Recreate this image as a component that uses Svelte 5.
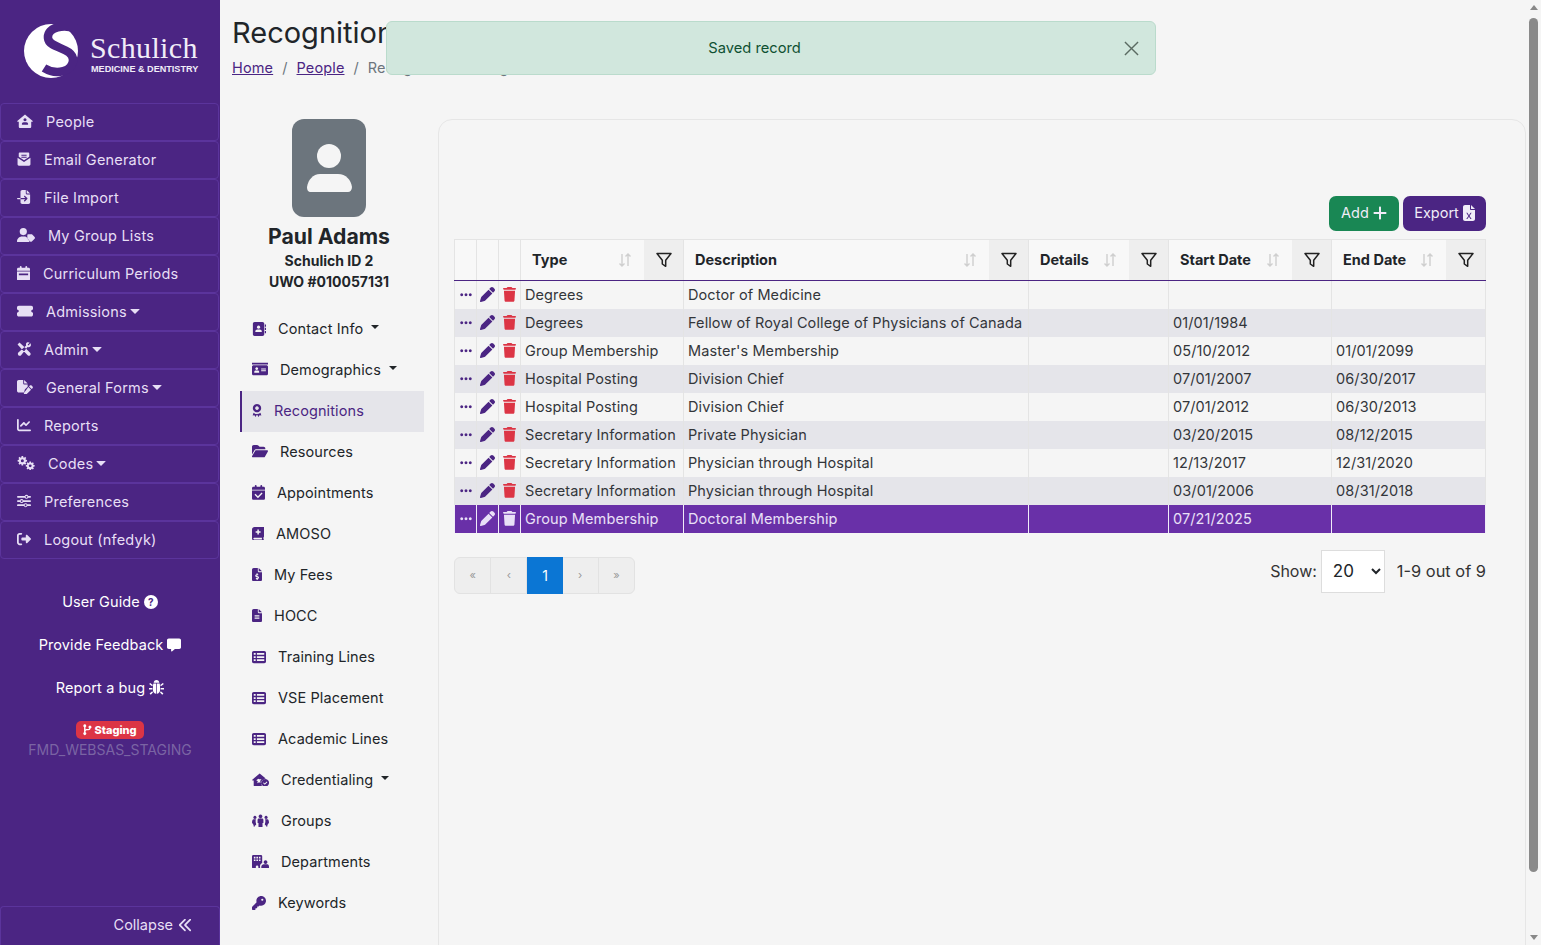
<script>
  function gear(cx, cy, r, n = 8) {
    let d = '';
    const step = (Math.PI * 2) / n;
    for (let i = 0; i < n; i++) {
      const a = i * step;
      const pts = [[-0.3, 0.76], [-0.2, 1], [0.2, 1], [0.3, 0.76]];
      for (const [o, k] of pts) {
        const t = a + o * step * 1.1;
        d += (d ? 'L' : 'M') + (cx + Math.cos(t) * r * k).toFixed(1) + ' ' + (cy + Math.sin(t) * r * k).toFixed(1);
      }
    }
    const h = r * 0.32;
    d += `Z M${cx - h} ${cy}a${h} ${h} 0 1 0 ${2 * h} 0a${h} ${h} 0 1 0 ${-2 * h} 0Z`;
    return d;
  }
  const I = {
    house: ['0 0 576 512', 'M288 16L566 250c10 10 4 30-12 30h-42v180c0 28-22 50-50 50H114c-28 0-50-22-50-50V280H22c-16 0-22-20-12-30ZM288 150a55 55 0 1 0 .1 0ZM240 300h96c40 0 66 30 66 70 0 10-8 18-18 18H192c-10 0-18-8-18-18 0-40 26-70 66-70Z'],
    mail: ['0 0 512 512', 'M96 20h320c20 0 32 14 32 32v120L256 300 64 172V52c0-18 12-32 32-32ZM160 100h192v40H160ZM160 170h192v40H160ZM20 210l236 160 236-160v240c0 30-22 50-50 50H70c-28 0-50-20-50-50Z'],
    fileimp: ['0 0 512 512', 'M192 0h130v130c0 18 14 32 32 32h126v286c0 35-29 64-64 64H192c-35 0-64-29-64-64V336h174l-40 40c-9 9-9 25 0 34s25 9 34 0l80-80c9-9 9-25 0-34l-80-80c-9-9-25-9-34 0s-9 25 0 34l40 40H128V64C128 29 157 0 192 0ZM354 0l126 130H354ZM24 288h104v48H24c-13 0-24-11-24-24s11-24 24-24Z'],
    usertag: ['0 0 640 512', 'M224 256a128 128 0 1 0 0-256 128 128 0 1 0 0 256ZM178 304h90c40 0 75 20 95 50v10l70 70c15 15 15 40 0 55l-10 23H30c-16 0-30-14-30-30C0 384 80 304 178 304ZM400 220h110c12 0 24 5 32 13l85 85c17 17 17 45 0 62L527 480c-17 17-45 17-62 0l-85-85c-8-8-13-20-13-32V252c0-18 14-32 33-32Z'],
    cal: ['0 0 448 512', 'M128 0c18 0 32 14 32 32v32h128V32c0-18 14-32 32-32s32 14 32 32v32h48c26 0 48 22 48 48v48H0v-48c0-26 22-48 48-48h48V32c0-18 14-32 32-32ZM0 192h448v272c0 26-22 48-48 48H48c-26 0-48-22-48-48ZM64 256v64h320v-64Z'],
    ticket: ['0 0 576 512', 'M64 64C29 64 0 93 0 128v64c0 9 7 16 16 16 26 0 48 22 48 48s-22 48-48 48c-9 0-16 7-16 16v64c0 35 29 64 64 64h448c35 0 64-29 64-64v-64c0-9-7-16-16-16-26 0-48-22-48-48s22-48 48-48c9 0 16-7 16-16v-64c0-35-29-64-64-64Z'],
    tools: ['0 0 512 512', 'M20 90L90 20l160 140 230 230c25 25 25 65 0 90-25 25-65 25-90 0L160 250ZM360 20c30-20 75-20 105 5l-75 70 30 30 70-75c25 30 25 75 5 105-25 35-70 45-110 30L150 480c-25 25-75 25-100 0s-25-75 0-100L335 130c-15-40-10-85 25-110Z'],
    filepen: ['0 0 576 512', 'M64 0h160v128c0 18 14 32 32 32h128v80L290 335c-8 8-14 19-16 30l-18 85H64c-35 0-64-29-64-64V64C0 29 29 0 64 0ZM256 0l128 128H256ZM525 200l34 34c18 18 18 45 0 62l-30 30-96-96 30-30c18-18 44-18 62 0ZM410 254l96 96-170 170c-6 6-14 10-22 12l-74 12 12-74c2-8 6-16 12-22Z'],
    chart: ['0 0 512 512', 'M32 32a32 32 0 0 1 32 32V400c0 9 7 16 16 16H480a32 32 0 0 1 0 64H80C36 480 0 444 0 400V64A32 32 0 0 1 32 32ZM467 169L352 284c-12 12-33 12-45 0l-57-57-87 87c-12 12-33 12-45 0s-12-33 0-45L228 159c12-12 33-12 45 0l57 57 92-92c12-12 33-12 45 0s12 33 0 45Z'],
    gears: ['0 0 640 512', gear(190, 170, 170, 8) + gear(470, 350, 160, 8)],
    sliders: ['0 0 512 512', 'M32 70h250a72 72 0 0 1 130 0h68a32 32 0 0 1 0 64h-68a72 72 0 0 1-130 0H32a32 32 0 0 1 0-64ZM347 70a32 32 0 1 0 .1 0ZM32 224h74a72 72 0 0 1 130 0h244a32 32 0 0 1 0 64H236a72 72 0 0 1-130 0H32a32 32 0 0 1 0-64ZM171 224a32 32 0 1 0 .1 0ZM32 378h218a72 72 0 0 1 130 0h100a32 32 0 0 1 0 64H380a72 72 0 0 1-130 0H32a32 32 0 0 1 0-64ZM315 378a32 32 0 1 0 .1 0Z'],
    logout: ['0 0 512 512', 'M160 96c18 0 32-14 32-32s-14-32-32-32H96C43 32 0 75 0 128v256c0 53 43 96 96 96h64c18 0 32-14 32-32s-14-32-32-32H96c-18 0-32-14-32-32V128c0-18 14-32 32-32ZM505 273c9-9 9-25 0-34L377 111c-9-9-23-12-35-7s-20 17-20 30v66H192c-18 0-32 14-32 32v48c0 18 14 32 32 32h130v66c0 13 8 25 20 30s26 2 35-7Z'],
    comment: ['0 0 512 512', 'M64 16h384c35 0 64 29 64 64v256c0 35-29 64-64 64H290l-110 90c-12 10-30 1-30-14v-76H64c-35 0-64-29-64-64V80c0-35 29-64 64-64Z'],
    bug: ['0 0 512 512', 'M256 0c53 0 96 43 96 96H160c0-53 43-96 96-96ZM150 118h94v350c-60-5-110-60-110-130 0-80 0-190 16-220ZM268 118h94c16 30 16 140 16 220 0 70-50 125-110 130ZM40 100l90 70-24 40-100-70ZM472 100l-90 70 24 40 100-70ZM0 270h115v55H0ZM397 270h115v55H397ZM110 385l25 40-75 80-40-40ZM402 385l-25 40 75 80 40-40Z'],
    branch: ['0 0 448 512', 'M80 16a64 64 0 0 1 32 120v110c25-15 55-22 96-22h30c25 0 38-14 43-32a64 64 0 1 1 62 2c-8 50-45 90-105 90h-30c-60 0-90 25-96 55v36a64 64 0 1 1-64 0V136A64 64 0 0 1 80 16Z'],
    addr: ['0 0 512 512', 'M96 0h288c35 0 64 29 64 64v384c0 35-29 64-64 64H96c-35 0-64-29-64-64V64C32 29 61 0 96 0ZM240 130a60 60 0 1 0 .1 0ZM200 270h80c45 0 80 35 80 75 0 12-10 22-22 22H142c-12 0-22-10-22-22 0-40 35-75 80-75ZM470 90h42v80h-42ZM470 210h42v80h-42ZM470 330h42v80h-42Z'],
    idcard: ['0 0 576 512', 'M0 30h576v60H0ZM64 120h448c35 0 64 20 64 50v250c0 35-29 60-64 60H64c-35 0-64-25-64-60V170c0-30 29-50 64-50ZM170 190a50 50 0 1 0 .1 0ZM130 310h80c30 0 50 25 50 60 0 10-8 20-20 20H100c-12 0-20-10-20-20 0-35 20-60 50-60ZM330 230v36h170v-36ZM330 300v36h170v-36Z'],
    award: ['0 0 384 512', 'M192 0a160 160 0 1 1-.1 0ZM192 90a70 70 0 1 0 .1 0ZM60 340c35 30 80 45 132 45s97-15 132-45l35 105-70-15-40 70-57-100-57 100-40-70-70 15Z'],
    calcheck: ['0 0 448 512', 'M128 0c18 0 32 14 32 32v32h128V32c0-18 14-32 32-32s32 14 32 32v32h48c26 0 48 22 48 48v48H0v-48c0-26 22-48 48-48h48V32c0-18 14-32 32-32ZM0 192h448v272c0 26-22 48-48 48H48c-26 0-48-22-48-48ZM330 262L205 387l-85-85-34 34 119 119 159-159Z'],
    book: ['0 0 448 512', 'M96 0h352v352c0 16-8 30-20 38v58c18 0 20 64 0 64H80c-45 0-80-35-80-80V96C0 43 43 0 96 0ZM200 96v64h-64v56h64v64h56v-64h64v-56h-64V96ZM80 400c-18 0-32 14-32 32s14 32 32 32h290v-64Z'],
    feedollar: ['0 0 384 512', 'M64 0h160v128c0 18 14 32 32 32h128v288c0 35-29 64-64 64H64c-35 0-64-29-64-64V64C0 29 29 0 64 0ZM256 0l128 128H256ZM176 200v36c-30 8-52 30-52 60 0 40 35 52 64 60 20 6 34 10 34 20 0 12-32 16-65 0l-15 38c15 7 28 10 34 12v38h42v-36c32-8 52-30 52-60 0-40-35-52-64-60-22-6-34-10-34-20 0-12 30-16 58-4l15-38c-12-5-23-8-31-10v-36Z'],
    filelines: ['0 0 384 512', 'M64 0h160v128c0 18 14 32 32 32h128v288c0 35-29 64-64 64H64c-35 0-64-29-64-64V64C0 29 29 0 64 0ZM256 0l128 128H256ZM100 240v44h184v-44ZM100 330v44h184v-44Z'],
    table: ['0 0 512 512', 'M64 32h384c35 0 64 29 64 64v320c0 35-29 64-64 64H64c-35 0-64-29-64-64V96c0-35 29-64 64-64ZM64 110v64h70v-64ZM180 110v64h268v-64ZM64 224v64h70v-64ZM180 224v64h268v-64ZM64 338v64h70v-64ZM180 338v64h268v-64Z'],
    cred: ['0 0 640 512', 'M288 16l230 190c-90 10-165 90-165 190 0 40 10 80 35 116H114c-28 0-50-22-50-50V280H22c-16 0-22-20-12-30ZM240 220l-80 50 60 45-25 75 75-45 45 30-5-85 50-50h-80l-40-20ZM496 224a144 144 0 1 1-.1 0ZM555 320l-75 75-40-40-24 24 64 64 99-99Z'],
    group: ['0 0 640 512', 'M320 20a70 70 0 1 1-.1 0ZM110 70a60 60 0 1 1-.1 0ZM530 70a60 60 0 1 1-.1 0ZM260 170h120c30 0 50 25 50 60v110h-34v150H244V340h-34V230c0-35 20-60 50-60ZM60 200h90c-20 40-20 110 5 170v50h-45v50H60v-60L0 330c0-70 20-130 60-130ZM490 200h90c40 0 60 60 60 130l-60 80v60h-50v-50h-45v-50c25-60 25-130 5-170Z'],
    dept: ['0 0 640 512', 'M48 0h288c26 0 48 22 48 48v250c-50 20-80 70-80 110v104H240v-70c0-26-22-48-48-48s-48 22-48 48v70H48c-26 0-48-22-48-48V48C0 22 22 0 48 0ZM70 70v60h60V70ZM165 70v60h60V70ZM260 70v60h60V70ZM70 170v60h60v-60ZM165 170v60h60v-60ZM260 170v60h60v-60ZM510 200a70 70 0 1 1-.1 0ZM440 350h140c35 0 60 35 60 90v72H350v-72c0-55 55-90 90-90Z'],
    key: ['0 0 512 512', 'M336 352c97 0 176-79 176-176S433 0 336 0 160 79 160 176c0 19 3 37 8 54L7 391c-5 5-7 11-7 17v80c0 13 11 24 24 24h80c13 0 24-11 24-24v-40h40c13 0 24-11 24-24v-40h40c6 0 13-3 17-7l33-33c17 5 35 8 54 8ZM376 96a40 40 0 1 1 0 80 40 40 0 1 1 0-80Z'],
    dots: ['0 0 448 512', 'M8 256a56 56 0 1 1 112 0 56 56 0 1 1-112 0ZM168 256a56 56 0 1 1 112 0 56 56 0 1 1-112 0ZM384 200a56 56 0 1 1 0 112 56 56 0 1 1 0-112Z'],
    pen: ['0 0 512 512', 'M362.7 19.3L314.3 67.7 444.3 197.7l48.4-48.4c25-25 25-65.5 0-90.5L453.3 19.3c-25-25-65.5-25-90.5 0zm-71 71L58.6 323.5c-10.4 10.4-18 23.3-22.2 37.4L1 481.2C-1.5 489.7 .8 498.8 7 505s15.3 8.5 23.7 6.1l120.3-35.4c14.1-4.2 27-11.8 37.4-22.2L421.7 220.3 291.7 90.3z'],
    trash: ['0 0 448 512', 'M135.2 17.7L128 32H32C14.3 32 0 46.3 0 64S14.3 96 32 96H416c17.7 0 32-14.3 32-32s-14.3-32-32-32H320l-7.2-14.3C307.4 6.8 296.3 0 284.2 0H163.8c-12.1 0-23.2 6.8-28.6 17.7zM416 128H32L53.2 467c1.6 25.3 22.6 45 47.9 45H346.9c25.3 0 46.3-19.7 47.9-45L416 128z'],
    folder: ['0 0 576 512', 'M88.7 223.8L0 375.8V96C0 60.7 28.7 32 64 32H181.5c17 0 33.3 6.7 45.3 18.7l26.5 26.5c12 12 28.3 18.7 45.3 18.7H416c35.3 0 64 28.7 64 64v32H144c-22.8 0-43.8 12.1-55.3 31.8zm27.6 16.1C122.1 230 132.6 224 144 224H544c11.5 0 22 6.1 27.7 16.1s5.7 22.2-.1 32.1l-112 192C453.9 474 443.4 480 432 480H32c-11.5 0-22-6.1-27.7-16.1s-5.7-22.2 .1-32.1l112-192z'],
    plus: ['0 0 448 512', 'M256 80c0-18-14-32-32-32s-32 14-32 32V224H48c-18 0-32 14-32 32s14 32 32 32H192V432c0 18 14 32 32 32s32-14 32-32V288H400c18 0 32-14 32-32s-14-32-32-32H256Z'],
    excel: ['0 0 384 512', 'M64 0h160v128c0 18 14 32 32 32h128v288c0 35-29 64-64 64H64c-35 0-64-29-64-64V64C0 29 29 0 64 0ZM256 0l128 128H256ZM140 250l-36 0 68 100-68 100h36l50-74 50 74h36l-68-100 68-100h-36l-50 74Z'],
    angles: ['0 0 512 512', 'M41 233L233 41c12-12 33-12 45 0s12 33 0 45L108 256 278 426c12 12 12 33 0 45s-33 12-45 0L41 279c-12-12-12-33 0-46ZM233 233L425 41c12-12 33-12 45 0s12 33 0 45L300 256 470 426c12 12 12 33 0 45s-33 12-45 0L233 279c-12-12-12-33 0-46Z']
  };

  const menu = [
    { t: 'People', i: 'house', w: 16 },
    { t: 'Email Generator', i: 'mail', w: 14 },
    { t: 'File Import', i: 'fileimp', w: 14 },
    { t: 'My Group Lists', i: 'usertag', w: 18 },
    { t: 'Curriculum Periods', i: 'cal', w: 13 },
    { t: 'Admissions', i: 'ticket', w: 16, c: 1 },
    { t: 'Admin', i: 'tools', w: 14, c: 1 },
    { t: 'General Forms', i: 'filepen', w: 16, c: 1 },
    { t: 'Reports', i: 'chart', w: 14 },
    { t: 'Codes', i: 'gears', w: 18, c: 1 },
    { t: 'Preferences', i: 'sliders', w: 14 },
    { t: 'Logout (nfedyk)', i: 'logout', w: 14 }
  ];
  const sub = [
    { t: 'Contact Info', i: 'addr', w: 14, c: 1 },
    { t: 'Demographics', i: 'idcard', w: 16, c: 1 },
    { t: 'Recognitions', i: 'award', w: 10, on: 1 },
    { t: 'Resources', i: 'folder', w: 16 },
    { t: 'Appointments', i: 'calcheck', w: 13 },
    { t: 'AMOSO', i: 'book', w: 12 },
    { t: 'My Fees', i: 'feedollar', w: 10 },
    { t: 'HOCC', i: 'filelines', w: 10 },
    { t: 'Training Lines', i: 'table', w: 14 },
    { t: 'VSE Placement', i: 'table', w: 14 },
    { t: 'Academic Lines', i: 'table', w: 14 },
    { t: 'Credentialing', i: 'cred', w: 17, c: 1 },
    { t: 'Groups', i: 'group', w: 17 },
    { t: 'Departments', i: 'dept', w: 17 },
    { t: 'Keywords', i: 'key', w: 14 }
  ];
  const cols = ['Type', 'Description', 'Details', 'Start Date', 'End Date'];
  const rows = [
    ['Degrees', 'Doctor of Medicine', '', '', ''],
    ['Degrees', 'Fellow of Royal College of Physicians of Canada', '', '01/01/1984', ''],
    ['Group Membership', "Master's Membership", '', '05/10/2012', '01/01/2099'],
    ['Hospital Posting', 'Division Chief', '', '07/01/2007', '06/30/2017'],
    ['Hospital Posting', 'Division Chief', '', '07/01/2012', '06/30/2013'],
    ['Secretary Information', 'Private Physician', '', '03/20/2015', '08/12/2015'],
    ['Secretary Information', 'Physician through Hospital', '', '12/13/2017', '12/31/2020'],
    ['Secretary Information', 'Physician through Hospital', '', '03/01/2006', '08/31/2018'],
    ['Group Membership', 'Doctoral Membership', '', '07/21/2025', '']
  ];
  const pages = ['«', '‹', '1', '›', '»'];
  const ht = (name, w) => {
    const [, , vw, vh] = I[name][0].split(' ').map(Number);
    return (w * vh) / vw;
  };
</script>

{#snippet ic(name, w, cls = '')}
  <svg class="ic {cls}" viewBox={I[name][0]} width={w} height={ht(name, w)} aria-hidden="true"><path fill-rule="evenodd" d={I[name][1]} /></svg>
{/snippet}

<div class="page">
  <aside class="side">
    <div class="logo">
      <svg class="mark" viewBox="0 0 54 54" width="54" height="54" aria-hidden="true">
        <circle cx="27" cy="27" r="27" fill="#fff" />
        <path d="M56 6C40 -1 23 3 24 14c1 11 25 9 25 22 0 11-16 16-29 8" fill="none" stroke="#4b2583" stroke-width="8.5" />
      </svg>
      <div class="wordmark">
        <div class="schulich">Schulich</div>
        <div class="med">MEDICINE &amp; DENTISTRY</div>
      </div>
    </div>

    <nav class="menu">
      {#each menu as m}
        <div class="mi">
          {@render ic(m.i, m.w)}
          <span>{m.t}</span>
          {#if m.c}<i class="caret"></i>{/if}
        </div>
      {/each}
    </nav>

    <div class="links">
      <div class="lnk">User Guide <span class="q">?</span></div>
      <div class="lnk">Provide Feedback {@render ic('comment', 14)}</div>
      <div class="lnk">Report a bug {@render ic('bug', 15)}</div>
    </div>
    <div class="env">
      <span class="badge">{@render ic('branch', 10)}Staging</span>
      <div class="envname">FMD_WEBSAS_STAGING</div>
    </div>

    <div class="collapse">Collapse {@render ic('angles', 14)}</div>
  </aside>

  <main class="main">
    <header class="head">
      <h1>Recognitions Listing</h1>
      <div class="crumbs">
        <a href="#home">Home</a><span class="sl">/</span><a href="#people">People</a><span class="sl">/</span><span class="cur">Recognitions Listing</span>
      </div>
    </header>

    <div class="toast">
      <span>Saved record</span>
      <svg class="x" viewBox="0 0 16 16" width="15" height="15" aria-hidden="true"><path d="M1 1l14 14M15 1L1 15" stroke="#5b6b62" stroke-width="1.5" fill="none" /></svg>
    </div>

    <div class="body">
      <section class="profile">
        <svg class="avatar" viewBox="0 0 74 98" width="74" height="98" aria-hidden="true">
          <rect width="74" height="98" rx="12" fill="#6c757d" />
          <circle cx="37" cy="37" r="12" fill="#f5f5f5" />
          <path d="M28 55h18c8 0 13 6 14 13 0 3-2 5-4 5H19c-3 0-4-2-4-5 1-7 6-13 13-13Z" fill="#f5f5f5" />
        </svg>
        <div class="name">Paul Adams</div>
        <div class="idl">Schulich ID 2</div>
        <div class="idl">UWO #010057131</div>

        <nav class="sub">
          {#each sub as s}
            <div class="si" class:on={s.on}>
              {@render ic(s.i, s.w)}
              <span>{s.t}</span>
              {#if s.c}<i class="caret2"></i>{/if}
            </div>
          {/each}
        </nav>
      </section>

      <section class="card">
        <div class="actions">
          <button class="btn add">Add {@render ic('plus', 14)}</button>
          <button class="btn exp">Export {@render ic('excel', 12)}</button>
        </div>

        <table>
          <colgroup>
            <col class="c0" /><col class="c0" /><col class="c0" />
            <col class="c1" /><col class="c2" /><col class="c3" /><col class="c4" /><col class="c5" />
          </colgroup>
          <thead>
            <tr>
              <th></th><th></th><th></th>
              {#each cols as c}
                <th>
                  <div class="thc">
                    <span class="lab">{c}</span>
                    <svg class="sort" viewBox="0 0 14 14" width="14" height="14" aria-hidden="true">
                      <path d="M4 1v12M1.5 10.5 4 13l2.5-2.5M10 13V1M7.5 3.5 10 1l2.5 2.5" fill="none" stroke="#cfcfcf" stroke-width="1.4" />
                    </svg>
                    <span class="fil">
                      <svg viewBox="0 0 16 16" width="16" height="16" aria-hidden="true"><path d="M1 1.5h14L9.7 8.3v6L6.3 12V8.3Z" fill="none" stroke="#222" stroke-width="1.5" stroke-linejoin="round" /></svg>
                    </span>
                  </div>
                </th>
              {/each}
            </tr>
          </thead>
          <tbody>
            {#each rows as r, ri}
              <tr class:alt={ri % 2 === 1} class:sel={ri === 8}>
                <td class="tool">{@render ic('dots', 12, 'dots')}</td>
                <td class="tool">{@render ic('pen', 15, 'pen')}</td>
                <td class="tool">{@render ic('trash', 13, 'trash')}</td>
                {#each r as c}<td>{c}</td>{/each}
              </tr>
            {/each}
          </tbody>
        </table>

        <div class="foot">
          <div class="pager">
            {#each pages as p, i}
              <span class="pg" class:act={i === 2}>{p}</span>
            {/each}
          </div>
          <div class="show">
            <span class="showl">Show:</span>
            <select class="sel-n"><option>20</option></select>
            <span class="cnt">1-9 out of 9</span>
          </div>
        </div>
      </section>
    </div>
  </main>

  <div class="scroll">
    <i class="up"></i>
    <div class="thumb"></div>
    <i class="down"></i>
  </div>
</div>

<style>
  :global(body) {
    margin: 0;
    background: #f5f5f5;
    overflow: hidden;
  }
  .page {
    display: flex;
    width: 1541px;
    height: 945px;
    overflow: hidden;
    font-family: Inter, "Open Sans", sans-serif;
    font-size: 14.5px;
    color: #212529;
    background: #f5f5f5;
  }
  .ic {
    fill: currentColor;
    flex: none;
    display: inline-block;
  }
  .side {
    width: 220px;
    flex: none;
    background: #4b2583;
    color: #e7dff5;
    display: flex;
    flex-direction: column;
    box-sizing: border-box;
    height: 945px;
  }
  .logo {
    display: flex;
    gap: 12px;
    padding: 24px 0 0 24px;
    height: 79px;
    box-sizing: border-box;
  }
  .wordmark {
    padding-top: 9px;
    color: #f1edf8;
  }
  .schulich {
    font-family: "Liberation Serif", serif;
    font-size: 30px;
    line-height: 30px;
    letter-spacing: 0.35px;
  }
  .med {
    font-family: "Liberation Sans", sans-serif;
    font-size: 9.1px;
    font-weight: 700;
    line-height: 10px;
    margin-top: 1px;
    margin-left: 1px;
    white-space: nowrap;
  }
  .menu {
    margin-top: 24px;
    width: 219px;
  }
  .mi {
    height: 38px;
    box-sizing: border-box;
    border: 1px solid #5b349c;
    border-radius: 4px;
    display: flex;
    align-items: center;
    gap: 13px;
    padding: 0 0 2px 16px;
    letter-spacing: 0.2px;
  }
  .caret {
    width: 0;
    height: 0;
    border: 5px solid transparent;
    border-top: 5px solid #e7dff5;
    border-bottom: 0;
    margin-left: -10px;
    border-radius: 1px;
  }
  .links {
    margin-top: 21px;
    color: #fff;
  }
  .lnk {
    height: 43px;
    display: flex;
    align-items: center;
    justify-content: center;
    gap: 4px;
    letter-spacing: 0.1px;
  }
  .q {
    width: 14px;
    height: 14px;
    border-radius: 50%;
    background: #fff;
    color: #4b2583;
    font-size: 10px;
    font-weight: 700;
    text-align: center;
    line-height: 14px;
  }
  .env {
    margin-top: 12px;
    text-align: center;
  }
  .badge {
    display: inline-flex;
    align-items: center;
    gap: 1px;
    height: 18px;
    width: 68px;
    justify-content: center;
    background: #dc3545;
    color: #fff;
    font-size: 11px;
    font-weight: 800;
    border-radius: 5px;
  }
  .envname {
    font-size: 14px;
    line-height: 20px;
    color: #7a64a3;
    margin-top: 1px;
  }
  .collapse {
    margin-top: auto;
    height: 39px;
    box-sizing: border-box;
    border: 1px solid #5b349c;
    border-bottom: 0;
    border-radius: 4px 4px 0 0;
    display: flex;
    align-items: center;
    justify-content: flex-end;
    gap: 5px;
    padding-right: 27px;
    padding-bottom: 3px;
  }
  .main {
    flex: 1;
    min-width: 0;
    position: relative;
    display: flex;
    flex-direction: column;
  }
  .head {
    height: 119px;
    box-sizing: border-box;
    padding: 13px 0 0 12px;
  }
  h1 {
    margin: 0;
    font-size: 29px;
    font-weight: 400;
    line-height: 40px;
    white-space: nowrap;
  }
  .crumbs {
    margin-top: 5px;
    line-height: 20px;
    display: flex;
    letter-spacing: 0.13px;
  }
  .crumbs a {
    color: #4b2583;
    text-decoration: underline;
  }
  .sl {
    color: #6c757d;
    margin: 0 9px;
  }
  .cur {
    color: #6c757d;
  }
  .toast {
    position: absolute;
    left: 166px;
    top: 21px;
    width: 770px;
    height: 54px;
    box-sizing: border-box;
    background: #d1e7dd;
    border: 1px solid #badbcc;
    border-radius: 6px;
    color: #0f5132;
    display: flex;
    align-items: center;
    justify-content: center;
    font-size: 14.7px;
    padding: 0 33px 0 0;
  }
  .x {
    position: absolute;
    right: 16px;
    top: 19px;
  }
  .body {
    flex: 1;
    display: flex;
    min-height: 0;
  }
  .profile {
    width: 218px;
    flex: none;
    display: flex;
    flex-direction: column;
    align-items: center;
  }
  .avatar {
    display: block;
  }
  .name {
    font-size: 21.2px;
    font-weight: 700;
    line-height: 26px;
    margin-top: 6px;
    padding-bottom: 1px;
  }
  .idl {
    font-size: 14px;
    font-weight: 700;
    line-height: 21px;
  }
  .idl:first-of-type {
    margin-top: 2px;
  }
  .sub {
    align-self: stretch;
    margin: 17px 14px 0 20px;
  }
  .si {
    height: 41px;
    box-sizing: border-box;
    padding: 0 0 2px 12px;
    display: flex;
    align-items: center;
    gap: 12px;
    color: #212529;
    letter-spacing: 0.1px;
  }
  .si .ic {
    color: #4b2583;
  }
  .si.on {
    background: #e5e5ea;
    border-left: 2px solid #4b2583;
    padding-left: 10px;
    color: #4b2583;
  }
  .caret2 {
    width: 0;
    height: 0;
    border: 4px solid transparent;
    border-top: 4.5px solid #212529;
    border-bottom: 0;
    margin-left: -4px;
    margin-bottom: 3px;
  }
  .card {
    flex: 1;
    min-width: 0;
    height: 900px;
    box-sizing: border-box;
    border: 1px solid #e6e6e6;
    border-radius: 14px;
    padding: 76px 39px 0 15px;
  }
  .actions {
    display: flex;
    justify-content: flex-end;
    gap: 4px;
    height: 35px;
    margin-bottom: 8px;
    width: 1032px;
  }
  .btn {
    font: inherit;
    border: 0;
    border-radius: 7px;
    color: #f0ecf8;
    display: inline-flex;
    align-items: center;
    justify-content: center;
    gap: 4px;
    padding: 0 0 2px;
    height: 35px;
  }
  .add {
    background: #198754;
    width: 70px;
  }
  .exp {
    background: #4b2583;
    width: 83px;
  }
  table {
    width: 1031px;
    table-layout: fixed;
    border-collapse: collapse;
    font-size: 14.5px;
  }
  .c0 { width: 22px; }
  .c1 { width: 163px; }
  .c2 { width: 345px; }
  .c3 { width: 140px; }
  .c4 { width: 163px; }
  .c5 { width: 154px; }
  th {
    height: 41px;
    padding: 0;
    background: #f8f8f8;
    border: 1px solid #e4e4e4;
    border-bottom: 1.5px solid #4b2583;
    text-align: left;
    box-sizing: border-box;
  }
  .thc {
    display: flex;
    align-items: center;
    height: 40px;
    padding-left: 11px;
  }
  .lab {
    flex: 1;
    font-weight: 700;
    font-size: 14.5px;
    padding-bottom: 2px;
  }
  .sort {
    margin-right: 12px;
  }
  .fil {
    width: 39px;
    height: 40px;
    background: #eeeeee;
    display: flex;
    align-items: center;
    justify-content: center;
  }
  td {
    height: 28px;
    padding: 0 0 0 4px;
    border-left: 1px solid #e4e4e4;
    border-right: 1px solid #e4e4e4;
    white-space: nowrap;
    overflow: hidden;
    box-sizing: border-box;
    color: #33363a;
    letter-spacing: 0.1px;
  }
  tr.alt td {
    background: #e5e5ea;
  }
  td.tool {
    padding: 0;
    text-align: center;
    line-height: 0;
  }
  .dots, .pen {
    color: #4b2583;
  }
  .trash {
    color: #dc3545;
  }
  tr.sel td {
    background: #6930a8;
    color: #e9e0f7;
    border-color: #f0ecf8;
  }
  tr.sel .ic {
    color: #e9e0f7;
  }
  .foot {
    display: flex;
    justify-content: space-between;
    align-items: flex-start;
    margin-top: 17px;
    width: 1032px;
  }
  .pager {
    display: flex;
    margin-top: 7px;
    height: 37px;
    background: #eeeeee;
    border: 1px solid #e2e2e2;
    border-radius: 6px;
    box-sizing: border-box;
    width: 181px;
  }
  .pg {
    flex: 1;
    display: flex;
    align-items: center;
    justify-content: center;
    color: #9a9a9a;
    font-size: 11px;
    border-right: 1px solid #e2e2e2;
  }
  .pg:last-child {
    border-right: 0;
  }
  .pg.act {
    background: #0b76d4;
    color: #fff;
    font-size: 14px;
    border: 0;
    margin: -1px 0;
  }
  .show {
    display: flex;
    align-items: center;
    gap: 4px;
  }
  .showl {
    font-size: 16px;
    color: #333;
  }
  .sel-n {
    width: 64px;
    height: 43px;
    font: inherit;
    font-size: 17px;
    background: #fff;
    border: 1px solid #dddddd;
    padding-left: 7px;
    color: #212529;
    border-radius: 0;
  }
  .cnt {
    font-size: 16.4px;
    margin-left: 8px;
    color: #333;
  }
  .scroll {
    width: 15px;
    flex: none;
    display: flex;
    flex-direction: column;
    align-items: center;
    padding-top: 5px;
    box-sizing: border-box;
    height: 945px;
  }
  .up, .down {
    width: 0;
    height: 0;
    border: 4.5px solid transparent;
  }
  .up {
    border-bottom: 5px solid #888;
    border-top: 0;
  }
  .thumb {
    width: 9px;
    height: 854px;
    border-radius: 5px;
    background: #8a8a8a;
    margin-top: 8px;
  }
  .down {
    margin-top: auto;
    margin-bottom: 5px;
    border-top: 5px solid #888;
    border-bottom: 0;
  }
</style>
